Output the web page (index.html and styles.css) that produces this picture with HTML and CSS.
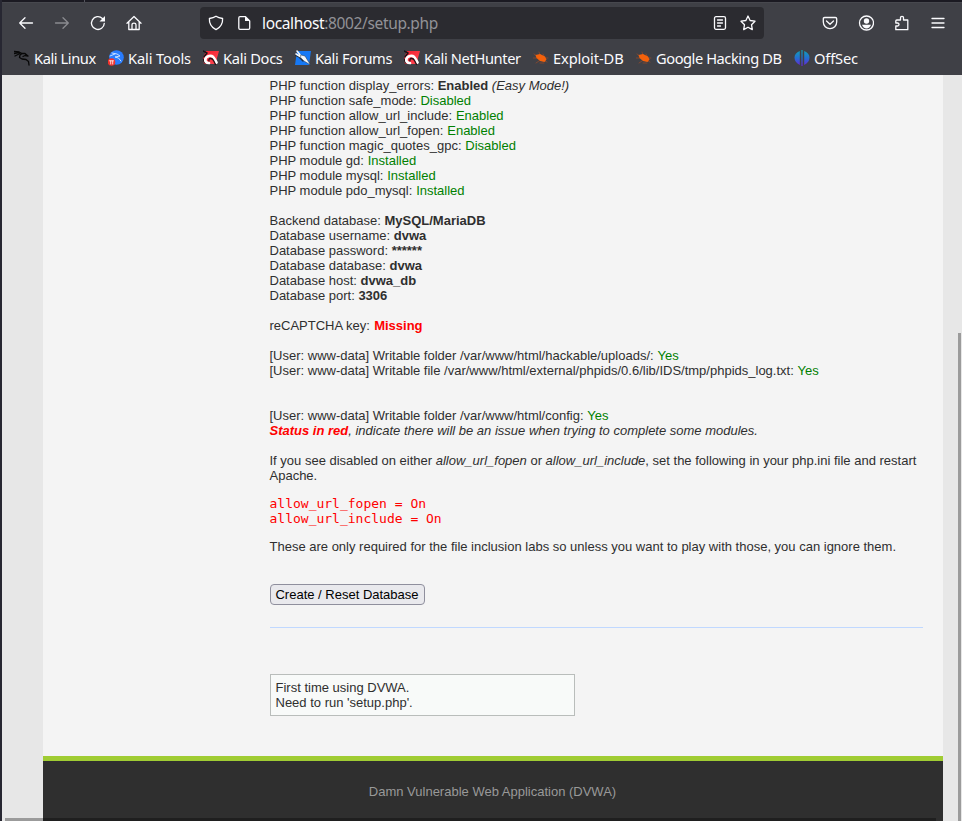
FILE: index.html
```html
<!DOCTYPE html>
<html lang="en">
<head>
<meta charset="utf-8">
<title>Setup :: Damn Vulnerable Web Application (DVWA)</title>
<link rel="stylesheet" href="styles.css">
</head>
<body>
<svg class="defs" width="0" height="0">
  <defs>
    <linearGradient id="red" x1="0" y1="0" x2="1" y2="1"><stop offset="0" stop-color="#f21d2c"/><stop offset="1" stop-color="#ff4a55"/></linearGradient>
    <linearGradient id="off" x1="0" y1="0" x2="0" y2="1"><stop offset="0" stop-color="#10a3b5"/><stop offset=".5" stop-color="#236fd0"/><stop offset="1" stop-color="#6a22d4"/></linearGradient>
    <symbol id="dragon" viewBox="0 0 16 16"><path d="M0 1.500 5 2 8 3.500 6 5 5.500 7.500 8 9 12 9.500 14.500 11.500 15 15" fill="none" stroke="#080808" stroke-width="1.300"/><path d="M0 3.500 5 2.500M1 6 6 3.500M8 3.500l3 0 3 2.500-3-.5-2 1" fill="none" stroke="#080808"/></symbol>
    <symbol id="docs" viewBox="0 0 16 16"><path d="M3 1h13l-2 7-1 6H1L0 8Z" fill="url(#red)"/><path d="M0 1l4 2-3 4M0 9l2 4" fill="none" stroke="#191417" stroke-width="1.500"/><path d="M6 13C1 12.500 1 7.500 6 6c4-1 5 2 7.500 6.500" fill="none" stroke="#fff" stroke-width="2.700"/><path d="M6 11c-1-3 3-3.500 4.500-.5l2 4" fill="none" stroke="#241318" stroke-width="1.300"/></symbol>
    <symbol id="bug" viewBox="0 0 16 16"><path d="M1 4 4 6M0 8h4M3 13l3-2M6 2l1 3M10 4l1 2M7 13h4M12 8h3M12 11l2 1" stroke="#a94b24" stroke-width=".6"/><path d="M2.500 5 7 4 12 6.500 13.500 9.500 11.500 12 7 11 3.500 8Z" fill="#f4610b"/></symbol>
  </defs>
</svg>
<header class="browser">
  <div class="tabs"></div>
  <div class="toolbar">
    <nav class="navigation">
      <svg viewBox="0 0 16 16"><path d="M14.500 8H1.700M7 2.700 1.700 8 7 13.300"/></svg>
      <svg class="disabled" viewBox="0 0 16 16"><path d="M1.500 8h12.800M9 2.700 14.300 8 9 13.300"/></svg>
      <svg viewBox="0 0 16 16"><path d="M14.300 8.300a6.400 6.400 0 1 1-1.900-4.800L14 5.300"/><path class="solid" d="M15 1v5.500H9.500Z"/></svg>
      <svg viewBox="0 0 16 16"><path d="M1 8.200 8 1.500l7 6.700M2.800 7v7.500h10.400V7M6 14V9.700q0-1.500 2-1.500t2 1.500V14"/></svg>
    </nav>
    <div class="address">
      <svg viewBox="0 0 16 16"><path d="M8 1.200q2.500 1.700 6.600 2.300.5 7.500-6.600 11.200Q.9 11 1.400 3.500 5.500 2.900 8 1.200Z"/></svg>
      <svg class="file" viewBox="0 0 16 16"><path d="M9.500 1.700H4Q2.800 1.700 2.800 3v10q0 1.300 1.200 1.300h8.500q1.200 0 1.200-1.300V6Z"/><path class="solid" d="M9 1.500V6h5Z"/></svg>
      <span class="url"><b>localhost</b>:8002/setup.php</span>
      <svg class="reader" viewBox="0 0 16 16"><rect x="2.500" y="1.700" width="11" height="12.600" rx="1.500"/><path d="M5.500 5h5M5.500 8h5M5.500 11h3"/></svg>
      <svg viewBox="0 0 16 16"><path d="m8 1 2.100 4.500 4.900.7-3.500 3.500.8 4.900L8 12.200l-4.300 2.400.8-4.900L1 6.200l4.900-.7Z"/></svg>
    </div>
    <nav class="actions">
      <svg viewBox="0 0 16 16"><path d="M2.700 2.500h10.600q1.400 0 1.400 1.300V7a6.700 6.700 0 0 1-13.400 0V3.800q0-1.300 1.400-1.300ZM4.500 6 8 9.300 11.500 6"/></svg>
      <svg viewBox="0 0 16 16"><circle cx="8.500" cy="8" r="7"/><circle class="solid" cx="8.500" cy="6" r="2.700"/><path class="solid" d="M4 9.800h9q-1.300 3.700-4.500 3.700T4 9.800Z"/></svg>
      <svg viewBox="0 0 16 16"><path d="M1.800 14.700h12V5H9.500V2.800q0-1.500-1.500-1.500T6.500 2.800V5H2.800q-1 0-1 1v2h1.700Q5 8 5 9.500T3.500 11H1.800Z"/></svg>
      <svg viewBox="0 0 16 16"><path d="M2 3.500h12M2 8h12M2 12.500h12"/></svg>
    </nav>
  </div>
  <nav class="bookmarks">
    <a class="linux"><svg><use href="#dragon"/></svg>Kali Linux</a>
    <a class="tools"><svg viewBox="0 0 16 16"><circle cx="8.500" cy="7.500" r="7.300" fill="#287cff"/><path d="m4 3 5 1 3 2-5 1q4 0 6 4M2 6l5-2" fill="none" stroke="#d5e8ff" stroke-width=".9"/><circle cx="3.500" cy="12" r="3.800" fill="#f3322c"/><path d="M1.500 10.800h4M2.700 11v3M4.700 11v3" stroke="#fff" stroke-width=".8"/></svg>Kali Tools</a>
    <a class="kdocs"><svg><use href="#docs"/></svg>Kali Docs</a>
    <a class="forums"><svg viewBox="0 0 16 16"><path d="M2 1h14l-2 14H0Z" fill="#1678f4"/><path d="m0 5 4 2 4 4" fill="none" stroke="#1c2b3e"/><path d="m2 1 4 5M1 4l5 3M6 6l4 4" fill="none" stroke="#f4f6f8" stroke-width="1.500"/><path d="m6 5 4 1 5.500 9L9 11 6 8Z" fill="#f4f6f8" stroke="#1c2b3e" stroke-width=".5"/></svg>Kali Forums</a>
    <a class="hunter"><svg><use href="#docs"/></svg>Kali NetHunter</a>
    <a class="exploit"><svg><use href="#bug"/></svg>Exploit-DB</a>
    <a class="google"><svg><use href="#bug"/></svg>Google Hacking DB</a>
    <a class="offsec"><svg viewBox="0 0 16 16"><path d="M5.800 1v14Q.5 12 .5 7.500T5.800 1ZM7.400 0h1.200v16H7.400ZM10.200 1q5.300 2 5.300 6.500T10.200 15Z" fill="url(#off)"/></svg>OffSec</a>
  </nav>
</header>
<div class="viewport">
  <div class="page">
    <main>
      <section>
        PHP function display_errors: <b>Enabled</b> <i>(Easy Mode!)</i><br>
        PHP function safe_mode: <span class="ok">Disabled</span><br>
        PHP function allow_url_include: <span class="ok">Enabled</span><br>
        PHP function allow_url_fopen: <span class="ok">Enabled</span><br>
        PHP function magic_quotes_gpc: <span class="ok">Disabled</span><br>
        PHP module gd: <span class="ok">Installed</span><br>
        PHP module mysql: <span class="ok">Installed</span><br>
        PHP module pdo_mysql: <span class="ok">Installed</span><br>
        <br>
        Backend database: <b>MySQL/MariaDB</b><br>
        Database username: <b>dvwa</b><br>
        Database password: <b>******</b><br>
        Database database: <b>dvwa</b><br>
        Database host: <b>dvwa_db</b><br>
        Database port: <b>3306</b><br>
        <br>
        reCAPTCHA key: <b class="bad">Missing</b><br>
        <br>
        [User: www-data] Writable folder /var/www/html/hackable/uploads/: <span class="ok">Yes</span><br>
        [User: www-data] Writable file /var/www/html/external/phpids/0.6/lib/IDS/tmp/phpids_log.txt: <span class="ok">Yes</span><br>
        <br>
        <br>
        [User: www-data] Writable folder /var/www/html/config: <span class="ok">Yes</span><br>
        <i><b class="bad">Status in red</b>, indicate there will be an issue when trying to complete some modules.</i><br>
        <br>
        If you see disabled on either <i>allow_url_fopen</i> or <i>allow_url_include</i>, set the following in your php.ini file and restart Apache.
      </section>
      <pre class="bad">allow_url_fopen = On
allow_url_include = On</pre>
      <p>These are only required for the file inclusion labs so unless you want to play with those, you can ignore them.</p>
      <button>Create / Reset Database</button>
      <hr>
      <div class="message">First time using DVWA.<br>Need to run 'setup.php'.</div>
    </main>
    <footer>Damn Vulnerable Web Application (DVWA)</footer>
  </div>
  <div class="scroll-y"></div>
  <div class="scroll-x"></div>
</div>
</body>
</html>
```

FILE: styles.css
```css
* { box-sizing: border-box; }
html, body { height: 100%; overflow: hidden; }
body { margin: 0; padding-left: 2px; background: #272732; font: 13px/15px "Liberation Sans", sans-serif; color: #2f2f2f; }
.defs { position: absolute; }
.browser { height: 75px; background: #3f4046; color: #fbfbfe; font-family: "Noto Sans", sans-serif; }
.tabs { height: 2px; background: linear-gradient(90deg, #1b1a22 82px, #55555e 82px 83px, #1b1a22 83px); }
.toolbar { height: 41px; display: flex; align-items: center; border-top: 1px solid #47484e; }
svg { flex: none; width: 16px; height: 16px; fill: none; stroke: #fbfbfe; stroke-width: 1.3; stroke-linecap: round; stroke-linejoin: round; }
.solid { fill: #fbfbfe; stroke: none; }
.navigation { width: 198px; padding-left: 16px; display: flex; gap: 20px; }
.disabled { opacity: .4; }
.address { width: 564px; height: 32px; padding: 0 8px; display: flex; align-items: center; background: #2b2b30; border-radius: 4px; }
.file { margin-left: 12px; }
.url { flex: 1; margin-left: 10px; font-size: 15.5px; line-height: 24px; letter-spacing: -.36px; color: #929297; white-space: nowrap; }
.url b { color: #fbfbfe; font-weight: 400; }
.reader { margin-right: 12px; }
.actions { margin-left: 58px; display: flex; gap: 20px; }
.bookmarks { height: 30px; padding-left: 12px; display: flex; align-items: center; gap: 12px; font-size: 14.67px; line-height: 20px; letter-spacing: -.42px; }
.bookmarks a { flex: none; display: flex; align-items: center; gap: 4px; white-space: nowrap; }
.bookmarks svg { stroke: none; }
.linux { width: 82px; }
.tools { width: 83px; letter-spacing: -.14px; }
.kdocs { width: 80px; letter-spacing: -.3px; }
.forums { width: 97px; letter-spacing: -.35px; }
.hunter { width: 117px; letter-spacing: -.37px; }
.exploit { width: 91px; letter-spacing: -.1px; }
.google { width: 146px; letter-spacing: -.45px; }
.offsec { letter-spacing: -.15px; }
.viewport { position: relative; height: 746px; background: #e7e7e7; overflow: hidden; }
.page { width: 900px; margin-left: 41px; background: #f4f4f4; }
main { height: 681px; padding: 3px 20px 0 226.5px; }
section .ok { margin-left: .2px; }
section > .bad { margin-left: .6px; }
pre { margin: 13px 0; font: 13px/15px "DejaVu Sans Mono", monospace; }
p { margin: 0 0 30px; }
.ok { color: #008000; }
.bad { color: #f00; }
button { display: block; width: 155px; height: 21px; padding: 0; border: 1px solid #8f8f9d; border-radius: 4px; background: #e9e9ed; color: #000; font: 13px/15px "Liberation Sans", sans-serif; }
hr { height: 1px; margin: 22px 0 46px; border: 0; background: #c0d8ff; }
.message { width: 305px; height: 42px; padding: 5px; border: 1px solid #b9bdbb; background: #f8faf9; }
footer { height: 65px; padding: 23px 1px 0 0; border-top: 5px solid #a0cc33; background: #2f2f2f; color: #999; text-align: center; }
.scroll-y { position: absolute; top: 258px; right: 1px; width: 3px; bottom: 0; background: #9b9b9b; }
.scroll-x { position: absolute; left: 3px; width: 931px; bottom: 0; height: 3px; background: linear-gradient(90deg, #9b9b9b 38px, #1f1f1f 38px); }
```
